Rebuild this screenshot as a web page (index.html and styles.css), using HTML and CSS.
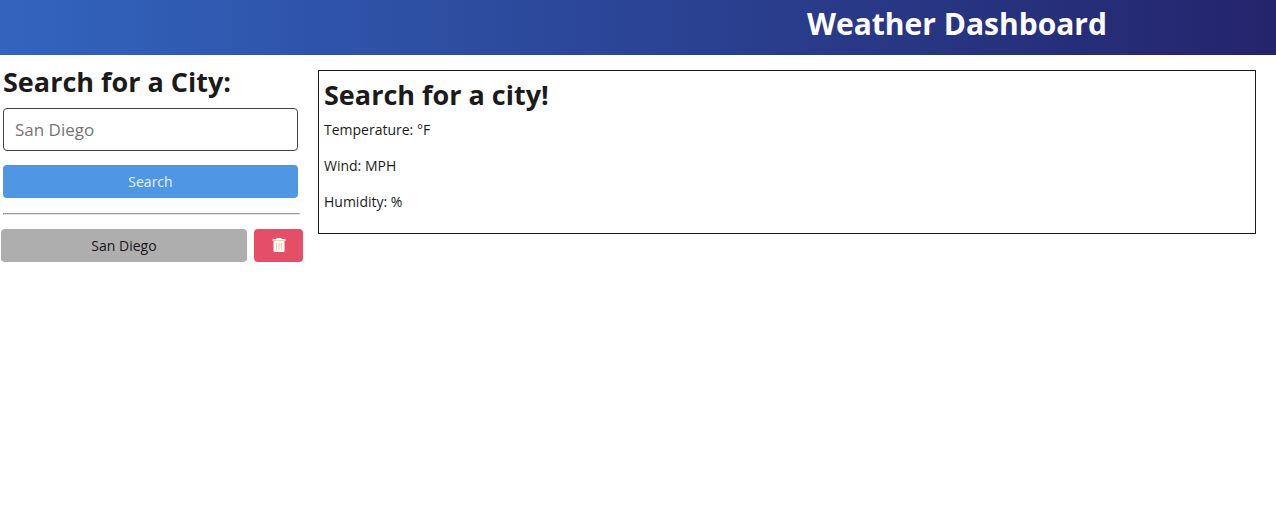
FILE: index.html
```html
<!DOCTYPE html>
<html lang="en">
<head>
<meta charset="utf-8">
<meta name="viewport" content="width=device-width, initial-scale=1">
<title>Weather Dashboard</title>
<link rel="stylesheet" href="styles.css">
</head>
<body>
<header class="header"><h1 class="header-title">Weather Dashboard</h1></header>
<main class="layout">
  <aside class="sidebar">
    <form class="search-form">
      <label class="heading" for="city">Search for a City:</label>
      <input class="city-input" id="city" type="text" placeholder="San Diego">
      <button class="button search-button" type="button">Search</button>
    </form>
    <hr class="divider">
    <div class="history-row">
      <button class="button history-button" type="button">San Diego</button>
      <button class="button delete-button" type="button" aria-label="Delete San Diego">
        <svg class="trash" viewBox="0 0 14 16" aria-hidden="true">
          <path fill="#fff" d="M4.5 0h5v1h4v2H.5V1h4z"/>
          <path fill="#fff" d="M1.500 3h11v10.200q0 .8-.8.8H2.300q-.8 0-.8-.8z"/>
          <path fill="none" stroke="#f8cfa0" d="M1 2.500h12M4.500 5v7M7 5v7M9.500 5v7"/>
        </svg>
      </button>
    </div>
  </aside>
  <section class="weather-card">
    <h2 class="heading">Search for a city!</h2>
    <p class="reading">Temperature: °F</p>
    <p class="reading">Wind: MPH</p>
    <p class="reading">Humidity: %</p>
  </section>
</main>
</body>
</html>
```
FILE: styles.css
```css
* { box-sizing: border-box; }
body {
  margin: 0;
  background: #fff;
  color: #1b1b1b;
  font-family: "Segoe UI", "Open Sans", "Noto Sans", sans-serif;
  font-size: 14px;
  line-height: 20px;
}
.header {
  padding: 0 0 8px 50%;
  background: linear-gradient(to right, #3264be, #24246c);
}
.header-title {
  margin: 0;
  color: #fff;
  font-size: 30px;
  line-height: 47px;
  text-align: center;
}
.layout {
  display: grid;
  grid-template-columns: 303px 1fr;
  gap: 15px;
  align-items: start;
  padding: 15px 20px 0 0;
}
.sidebar { padding-left: 1px; }
.search-form {
  display: flex;
  flex-direction: column;
  padding: 0 5px 0 2px;
}
.heading {
  margin: 0;
  font-size: 27px;
  font-weight: 700;
  line-height: 38px;
}
.search-form .heading { margin-top: -7px; }
.city-input {
  width: 100%;
  height: 43px;
  margin: 7px 0 14px;
  padding: 0 11px;
  border: 1px solid #444;
  border-radius: 4px;
  background: #fff;
  color: #1b1b1b;
  font: inherit;
  font-size: 17px;
}
.city-input::placeholder { color: #757575; opacity: 1; }
.button {
  height: 33px;
  padding: 0 8px;
  border: 0;
  border-radius: 4px;
  font: inherit;
  cursor: pointer;
}
.search-button { background: #4f97e5; color: #e8f1fb; }
.divider {
  margin: 15px 3px 14px 2px;
  border: 1px solid;
  border-color: #999 #e6e6e6 #e6e6e6 #999;
}
.history-row { display: flex; gap: 7px; }
.history-button { flex: 1; background: #aeaeae; color: #1b1420; }
.delete-button {
  display: flex;
  align-items: center;
  justify-content: center;
  width: 49px;
  background: #e64e67;
}
.trash { width: 14px; height: 16px; }
.weather-card {
  padding: 5px;
  border: 1px solid #1b1b1b;
}
.reading { margin: 0 0 16px; }
.weather-card .heading { margin-bottom: 6px; }
```
